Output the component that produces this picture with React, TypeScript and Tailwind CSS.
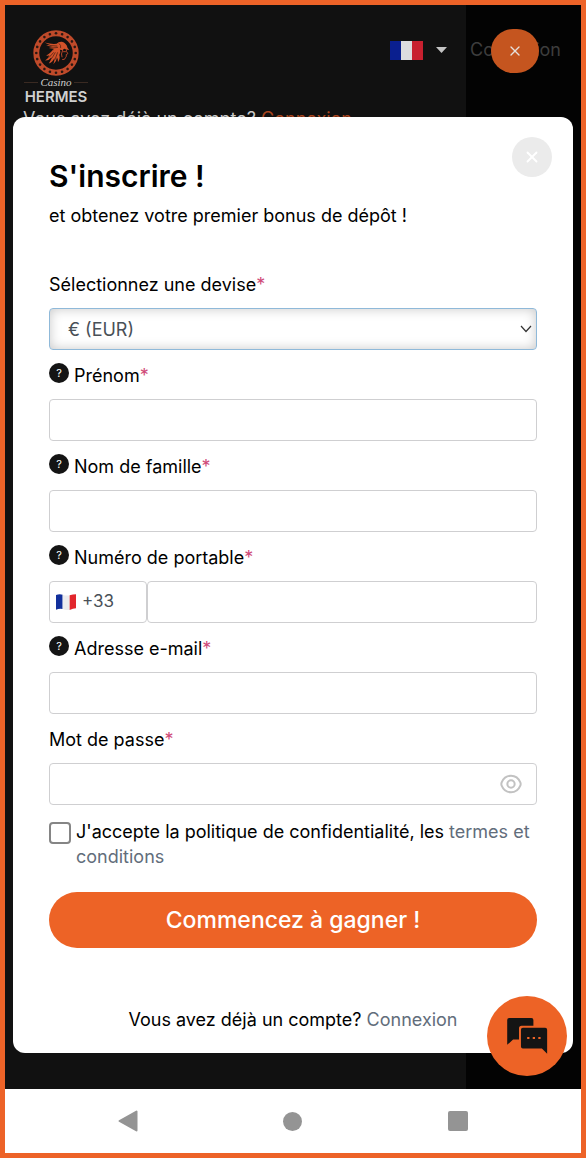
import { useState } from 'react';
import type { InputHTMLAttributes, ReactNode } from 'react';
import { X } from 'lucide-react';
import { clsx } from 'clsx';

function HermesEmblem() {
  const studs = Array.from({ length: 20 }, (_, i) => (i * 360) / 20);
  return (
    <svg viewBox="0 0 140 140" className="size-[46px]" aria-hidden="true">
      <circle cx="70" cy="70" r="60" fill="none" stroke="#bf4a2a" strokeWidth="18" />
      {studs.map((deg) => (
        <circle key={deg} cx="70" cy="10" r="4" fill="#2a1712" transform={`rotate(${deg} 70 70)`} />
      ))}
      {/* winged helmet */}
      <path
        d="M35 38 Q56 44 72 42 Q78 35 88 36 Q102 40 105 54 L110 61 L101 59 Q94 54 90 62 L82 60 L76 66 L58 62 L64 58 L48 55 L60 52 L40 47 L52 46 Z"
        fill="#d2522a"
      />
      <path d="M50 47 L74 49 M56 55 L76 53 M79 41 Q86 46 84 55" fill="none" stroke="#3a1a10" strokeWidth="2" />
      {/* hair */}
      <path
        d="M60 62 L82 60 Q86 68 80 76 Q84 86 76 98 Q76 88 73 84 Q72 96 62 104 Q66 94 65 86 Q60 98 48 102 Q56 92 56 84 Q48 94 37 93 Q48 86 50 76 Q44 80 40 78 Q52 72 60 62 Z"
        fill="#d2522a"
      />
      <path d="M68 68 Q62 80 54 90 M75 68 Q70 82 66 92 M63 68 Q56 76 48 84" fill="none" stroke="#3a1a10" strokeWidth="2" />
      {/* face profile */}
      <path
        d="M101 60 Q101 66 106 72 L101 75 Q103 80 99 84 Q97 92 90 90 M90 62 Q84 74 88 82 M93 66 L99 66"
        fill="none"
        stroke="#b8472a"
        strokeWidth="3"
        strokeLinecap="round"
      />
    </svg>
  );
}

function FrenchFlag({ className }: { className?: string }) {
  return (
    <svg viewBox="0 0 33 19" preserveAspectRatio="none" className={className} aria-hidden="true">
      <path d="M0 0h11v19H0z" fill="#0a1f8f" />
      <path d="M11 0h11v19H11z" fill="#dcdcdf" />
      <path d="M22 0h11v19H22z" fill="#c8202f" />
    </svg>
  );
}

function WavyFlag() {
  return (
    <svg viewBox="0 0 60 48" className="h-4 w-5" aria-hidden="true">
      <path d="M0 3 Q10 -1 20 2 V45 Q10 43 0 47 Z" fill="#12309c" />
      <path d="M20 2 Q30 6 41 4 V48 Q30 49 20 45 Z" fill="#ececee" />
      <path d="M41 4 Q51 1 60 1 V43 Q51 44 41 48 Z" fill="#e2262c" />
    </svg>
  );
}

function EyeIcon() {
  return (
    <svg viewBox="0 0 66 60" className="h-5 w-[22px]" fill="none" stroke="#c2c2c2" strokeWidth="6" aria-hidden="true">
      <path d="M33 5 C46 5 56 13 61 25 Q63 30 61 35 C56 47 46 55 33 55 C20 55 10 47 5 35 Q3 30 5 25 C10 13 20 5 33 5 Z" />
      <circle cx="33" cy="30" r="11" />
    </svg>
  );
}

function ChatIcon() {
  return (
    <svg viewBox="0 0 124 110" className="h-9 w-[41px]" aria-hidden="true">
      <path d="M6 0H74Q80 0 80 6V24H44Q36 24 36 32V66H18L0 82V6Q0 0 6 0Z" fill="#141414" />
      <path d="M48 30H116Q122 30 122 36V109L106 93H48Q42 93 42 87V36Q42 30 48 30Z" fill="#141414" />
      <path d="M61 58h7v6h-7zM78 58h7v6h-7zM95 58h7v6h-7z" fill="#ed6326" />
    </svg>
  );
}

interface FieldProps {
  id: string;
  label: string;
  help?: boolean;
  children: ReactNode;
}

function Field({ id, label, help, children }: FieldProps) {
  return (
    <div className="pt-[13px]">
      <div className="mb-[10px] flex items-start gap-[5px]">
        {help && (
          <button
            type="button"
            aria-label={`Aide : ${label}`}
            className="flex size-5 shrink-0 items-center justify-center rounded-full bg-[#141414] text-[11px] leading-none text-white"
          >
            ?
          </button>
        )}
        <label htmlFor={id} className="text-[18px] leading-[26px] text-black">
          {label}
          <span className="text-[#cf4a78]">*</span>
        </label>
      </div>
      {children}
    </div>
  );
}

function TextInput({ className, ...props }: InputHTMLAttributes<HTMLInputElement>) {
  return (
    <input
      {...props}
      className={clsx(
        'block h-[42px] w-full min-w-0 rounded-[4px] border border-[#cfcfd1] bg-white px-3 text-[17px] text-[#495057] outline-none',
        className
      )}
    />
  );
}

function SiteHeader() {
  return (
    <header className="relative h-28 overflow-hidden">
      <div className="flex h-[101px] items-start justify-between pl-[19px] pr-5">
        <a href="#" className="mt-[25px] flex w-16 flex-col items-center">
          <HermesEmblem />
          <span className="flex w-full items-center gap-[2px] font-['Liberation_Serif',serif] text-[11px] leading-[13px] text-[#cfcfcf] italic">
            <span className="h-px flex-1 bg-[#3a2a22]" />
            Casino
            <span className="h-px flex-1 bg-[#3a2a22]" />
          </span>
          <span className="text-[15px] leading-[16px] font-semibold text-[#d0d0d0]">HERMES</span>
        </a>
        <div className="mt-8 flex items-center">
          <button type="button" aria-label="Langue" className="flex items-center gap-[13px]">
            <FrenchFlag className="h-[19px] w-[33px]" />
            <svg viewBox="0 0 11 6" className="h-[6px] w-[11px]" aria-hidden="true">
              <path d="M0 0h11L5.5 6z" fill="#c4c4c4" />
            </svg>
          </button>
          <a href="#" className="ml-[23px] text-[18px] leading-[26px] text-[#3d3d3d]">
            Connexion
          </a>
        </div>
      </div>
      <p className="px-[18px] text-[18px] leading-[26px] text-[#c9c9c9]">
        Vous avez déjà un compte? <a href="#" className="text-[#a8451f]">Connexion</a>
      </p>
      <button
        type="button"
        aria-label="Fermer le menu"
        className="absolute top-6 right-[42px] flex h-11 w-12 items-center justify-center rounded-full bg-[#c5551f] text-[#e6e0dc]"
      >
        <X className="size-4" strokeWidth={2} />
      </button>
    </header>
  );
}

function SignupCard() {
  const [showPassword, setShowPassword] = useState(false);

  return (
    <main className="relative mx-2 rounded-xl bg-white px-9 pt-10 pb-5">
      <button
        type="button"
        aria-label="Fermer"
        className="absolute top-5 right-[21px] flex size-10 items-center justify-center rounded-full bg-[#ebebeb] text-white"
      >
        <X className="size-[18px]" strokeWidth={2.5} />
      </button>

      <h1 className="text-[30px] leading-[38px] font-semibold text-black">S'inscrire !</h1>
      <p className="mt-2 text-[18px] leading-[26px] text-black">et obtenez votre premier bonus de dépôt !</p>

      <form className="mt-[30px]" onSubmit={(e) => e.preventDefault()}>
        <Field id="currency" label="Sélectionnez une devise">
          <div className="relative">
            <select
              id="currency"
              className="block h-[42px] w-full appearance-none rounded-[4px] border border-[#8fb9d9] bg-white px-[18px] text-[18px] text-[#495057] shadow-[inset_0_0_12px_rgba(0,0,0,0.22)] outline-none"
            >
              <option>€ (EUR)</option>
            </select>
            <svg
              viewBox="0 0 12 8"
              className="pointer-events-none absolute top-[17px] right-[5px] h-2 w-3"
              fill="none"
              stroke="#333"
              strokeWidth="1.2"
              aria-hidden="true"
            >
              <path d="M1 1l5 5.5L11 1" />
            </svg>
          </div>
        </Field>

        <Field id="first-name" label="Prénom" help>
          <TextInput id="first-name" type="text" />
        </Field>

        <Field id="last-name" label="Nom de famille" help>
          <TextInput id="last-name" type="text" />
        </Field>

        <Field id="phone" label="Numéro de portable" help>
          <div className="flex">
            <button
              type="button"
              aria-label="Indicatif du pays"
              className="flex h-[42px] w-[98px] shrink-0 items-center gap-[6px] rounded-[4px] border border-[#cfcfd1] bg-white px-[6px] text-[17px] text-[#495057]"
            >
              <WavyFlag />
              +33
            </button>
            <TextInput id="phone" type="tel" />
          </div>
        </Field>

        <Field id="email" label="Adresse e-mail" help>
          <TextInput id="email" type="email" />
        </Field>

        <Field id="password" label="Mot de passe">
          <div className="relative">
            <TextInput id="password" type={showPassword ? 'text' : 'password'} className="pr-12" />
            <button
              type="button"
              aria-label="Afficher le mot de passe"
              onClick={() => setShowPassword(!showPassword)}
              className="absolute inset-y-0 right-[15px] flex items-center"
            >
              <EyeIcon />
            </button>
          </div>
        </Field>

        <div className="mt-[14px] flex items-start gap-[5px]">
          <input
            id="terms"
            type="checkbox"
            className="mt-[3px] size-[22px] shrink-0 appearance-none rounded-[4px] border-2 border-[#858585] bg-white checked:bg-[#ed6326]"
          />
          <label htmlFor="terms" className="text-[18px] leading-[25px] text-black">
            J'accepte la politique de confidentialité, les{' '}
            <a href="#" className="text-[#626d7b]">termes et conditions</a>
          </label>
        </div>

        <button
          type="submit"
          className="mt-[23px] h-14 w-full rounded-full bg-[#ed6326] text-[23px] font-medium text-white"
        >
          Commencez à gagner !
        </button>
      </form>

      <p className="mt-[59px] text-center text-[18px] leading-[26px] text-black">
        Vous avez déjà un compte? <a href="#" className="text-[#626d7b]">Connexion</a>
      </p>
    </main>
  );
}

function SystemNav() {
  return (
    <nav className="grid h-16 grid-cols-3 items-center justify-items-center bg-white px-10">
      <button type="button" aria-label="Retour">
        <svg viewBox="0 0 20 22" className="h-[22px] w-5" aria-hidden="true">
          <path d="M18.5 1.5v19L1.5 11z" fill="#949494" stroke="#949494" strokeWidth="2" strokeLinejoin="round" />
        </svg>
      </button>
      <button type="button" aria-label="Accueil" className="size-[19px] rounded-full bg-[#949494]" />
      <button type="button" aria-label="Applications récentes" className="size-5 rounded-[2px] bg-[#949494]" />
    </nav>
  );
}

export default function App() {
  return (
    <div className="border-[5px] border-[#ed6328] font-[Inter,sans-serif]">
      <div className="relative bg-[linear-gradient(to_right,#111111_80%,#030303_80%)] pb-9">
        <SiteHeader />
        <SignupCard />
        <button
          type="button"
          aria-label="Ouvrir le chat"
          className="absolute right-[14px] bottom-[13px] flex size-20 items-center justify-center rounded-full bg-[#ed6326]"
        >
          <ChatIcon />
        </button>
      </div>
      <SystemNav />
    </div>
  );
}
